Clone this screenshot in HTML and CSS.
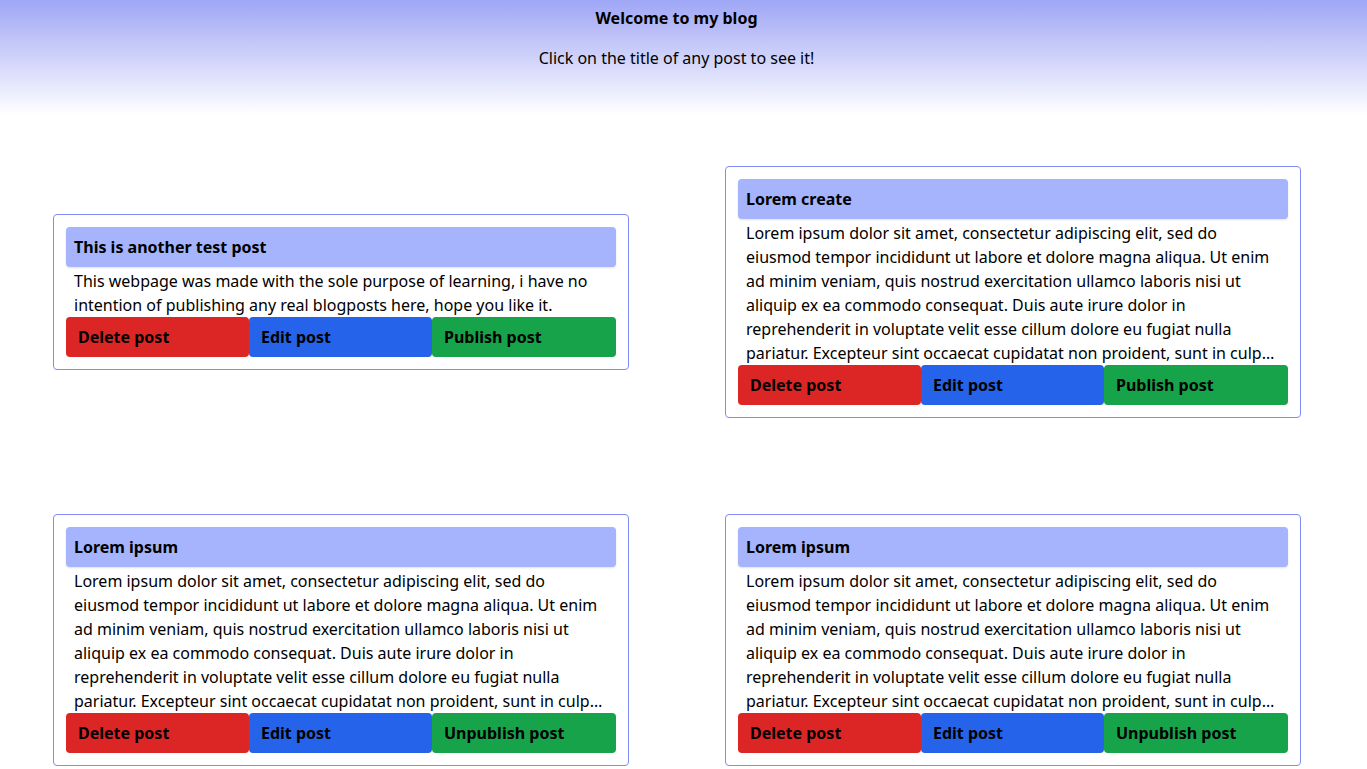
FILE: index.html
```html
<!DOCTYPE html>
<html lang="en">
<head>
<meta charset="utf-8">
<title>Welcome to my blog</title>
<link rel="stylesheet" href="styles.css">
</head>
<body>
<header class="site-header">
  <h1 class="site-title">Welcome to my blog</h1>
  <p class="site-subtitle">Click on the title of any post to see it!</p>
</header>
<main class="posts">
  <article class="post">
    <h2 class="post-title">This is another test post</h2>
    <p class="post-body">This webpage was made with the sole purpose of learning, i have no intention of publishing any real blogposts here, hope you like it.</p>
    <div class="post-actions">
      <button class="btn btn-delete">Delete post</button>
      <button class="btn btn-edit">Edit post</button>
      <button class="btn btn-publish">Publish post</button>
    </div>
  </article>
  <article class="post">
    <h2 class="post-title">Lorem create</h2>
    <p class="post-body">Lorem ipsum dolor sit amet, consectetur adipiscing elit, sed do eiusmod tempor incididunt ut labore et dolore magna aliqua. Ut enim ad minim veniam, quis nostrud exercitation ullamco laboris nisi ut aliquip ex ea commodo consequat. Duis aute irure dolor in reprehenderit in voluptate velit esse cillum dolore eu fugiat nulla pariatur. Excepteur sint occaecat cupidatat non proident, sunt in culpa qui officia deserunt mollit anim id est laborum.</p>
    <div class="post-actions">
      <button class="btn btn-delete">Delete post</button>
      <button class="btn btn-edit">Edit post</button>
      <button class="btn btn-publish">Publish post</button>
    </div>
  </article>
  <article class="post">
    <h2 class="post-title">Lorem ipsum</h2>
    <p class="post-body">Lorem ipsum dolor sit amet, consectetur adipiscing elit, sed do eiusmod tempor incididunt ut labore et dolore magna aliqua. Ut enim ad minim veniam, quis nostrud exercitation ullamco laboris nisi ut aliquip ex ea commodo consequat. Duis aute irure dolor in reprehenderit in voluptate velit esse cillum dolore eu fugiat nulla pariatur. Excepteur sint occaecat cupidatat non proident, sunt in culpa qui officia deserunt mollit anim id est laborum.</p>
    <div class="post-actions">
      <button class="btn btn-delete">Delete post</button>
      <button class="btn btn-edit">Edit post</button>
      <button class="btn btn-publish">Unpublish post</button>
    </div>
  </article>
  <article class="post">
    <h2 class="post-title">Lorem ipsum</h2>
    <p class="post-body">Lorem ipsum dolor sit amet, consectetur adipiscing elit, sed do eiusmod tempor incididunt ut labore et dolore magna aliqua. Ut enim ad minim veniam, quis nostrud exercitation ullamco laboris nisi ut aliquip ex ea commodo consequat. Duis aute irure dolor in reprehenderit in voluptate velit esse cillum dolore eu fugiat nulla pariatur. Excepteur sint occaecat cupidatat non proident, sunt in culpa qui officia deserunt mollit anim id est laborum.</p>
    <div class="post-actions">
      <button class="btn btn-delete">Delete post</button>
      <button class="btn btn-edit">Edit post</button>
      <button class="btn btn-publish">Unpublish post</button>
    </div>
  </article>
</main>
</body>
</html>
```
FILE: styles.css
```css
* { box-sizing: border-box; }

html, body {
  margin: 0;
  padding: 0;
  background: #ffffff;
  color: #000000;
  font-family: "Noto Sans", "Open Sans", sans-serif;
  font-size: 16px;
  line-height: 24px;
}

.site-header {
  height: 115px;
  padding: 6px 14px 0 0;
  text-align: center;
  background: linear-gradient(to bottom, #9fa6f5 0%, #ffffff 100%);
}

.site-title {
  margin: 0;
  font-size: 16px;
  line-height: 24px;
  font-weight: 700;
}

.site-subtitle {
  margin: 16px 0 0;
  font-size: 16px;
  line-height: 24px;
}

.posts {
  display: grid;
  grid-template-columns: 576px 576px;
  column-gap: 96px;
  row-gap: 96px;
  align-items: center;
  padding: 51px 0 40px 53px;
}

.post {
  border: 1px solid #818cf8;
  border-radius: 4px;
  padding: 12px;
  background: #ffffff;
}

.post-title {
  margin: 0 0 2px;
  padding: 8px;
  height: 40px;
  font-size: 16px;
  line-height: 24px;
  font-weight: 700;
  background: #a5b4fc;
  border-radius: 4px;
  box-shadow: 0 1px 2px rgba(0, 0, 0, 0.12);
}

.post-body {
  margin: 0;
  padding: 0 8px;
  font-size: 16px;
  line-height: 24px;
  display: -webkit-box;
  -webkit-box-orient: vertical;
  -webkit-line-clamp: 6;
  overflow: hidden;
}

.post-actions {
  display: flex;
}

.btn {
  flex: 0 0 183px;
  height: 40px;
  margin: 0;
  padding: 0 12px;
  border: none;
  border-radius: 4px;
  font-family: "Noto Sans", "Open Sans", sans-serif;
  font-size: 16px;
  font-weight: 700;
  line-height: 24px;
  text-align: left;
  color: #000000;
  cursor: pointer;
}

.btn-delete { background: #dc2626; }
.btn-edit { background: #2563eb; }
.btn-publish { background: #16a34a; flex: 1 1 auto; }
```
